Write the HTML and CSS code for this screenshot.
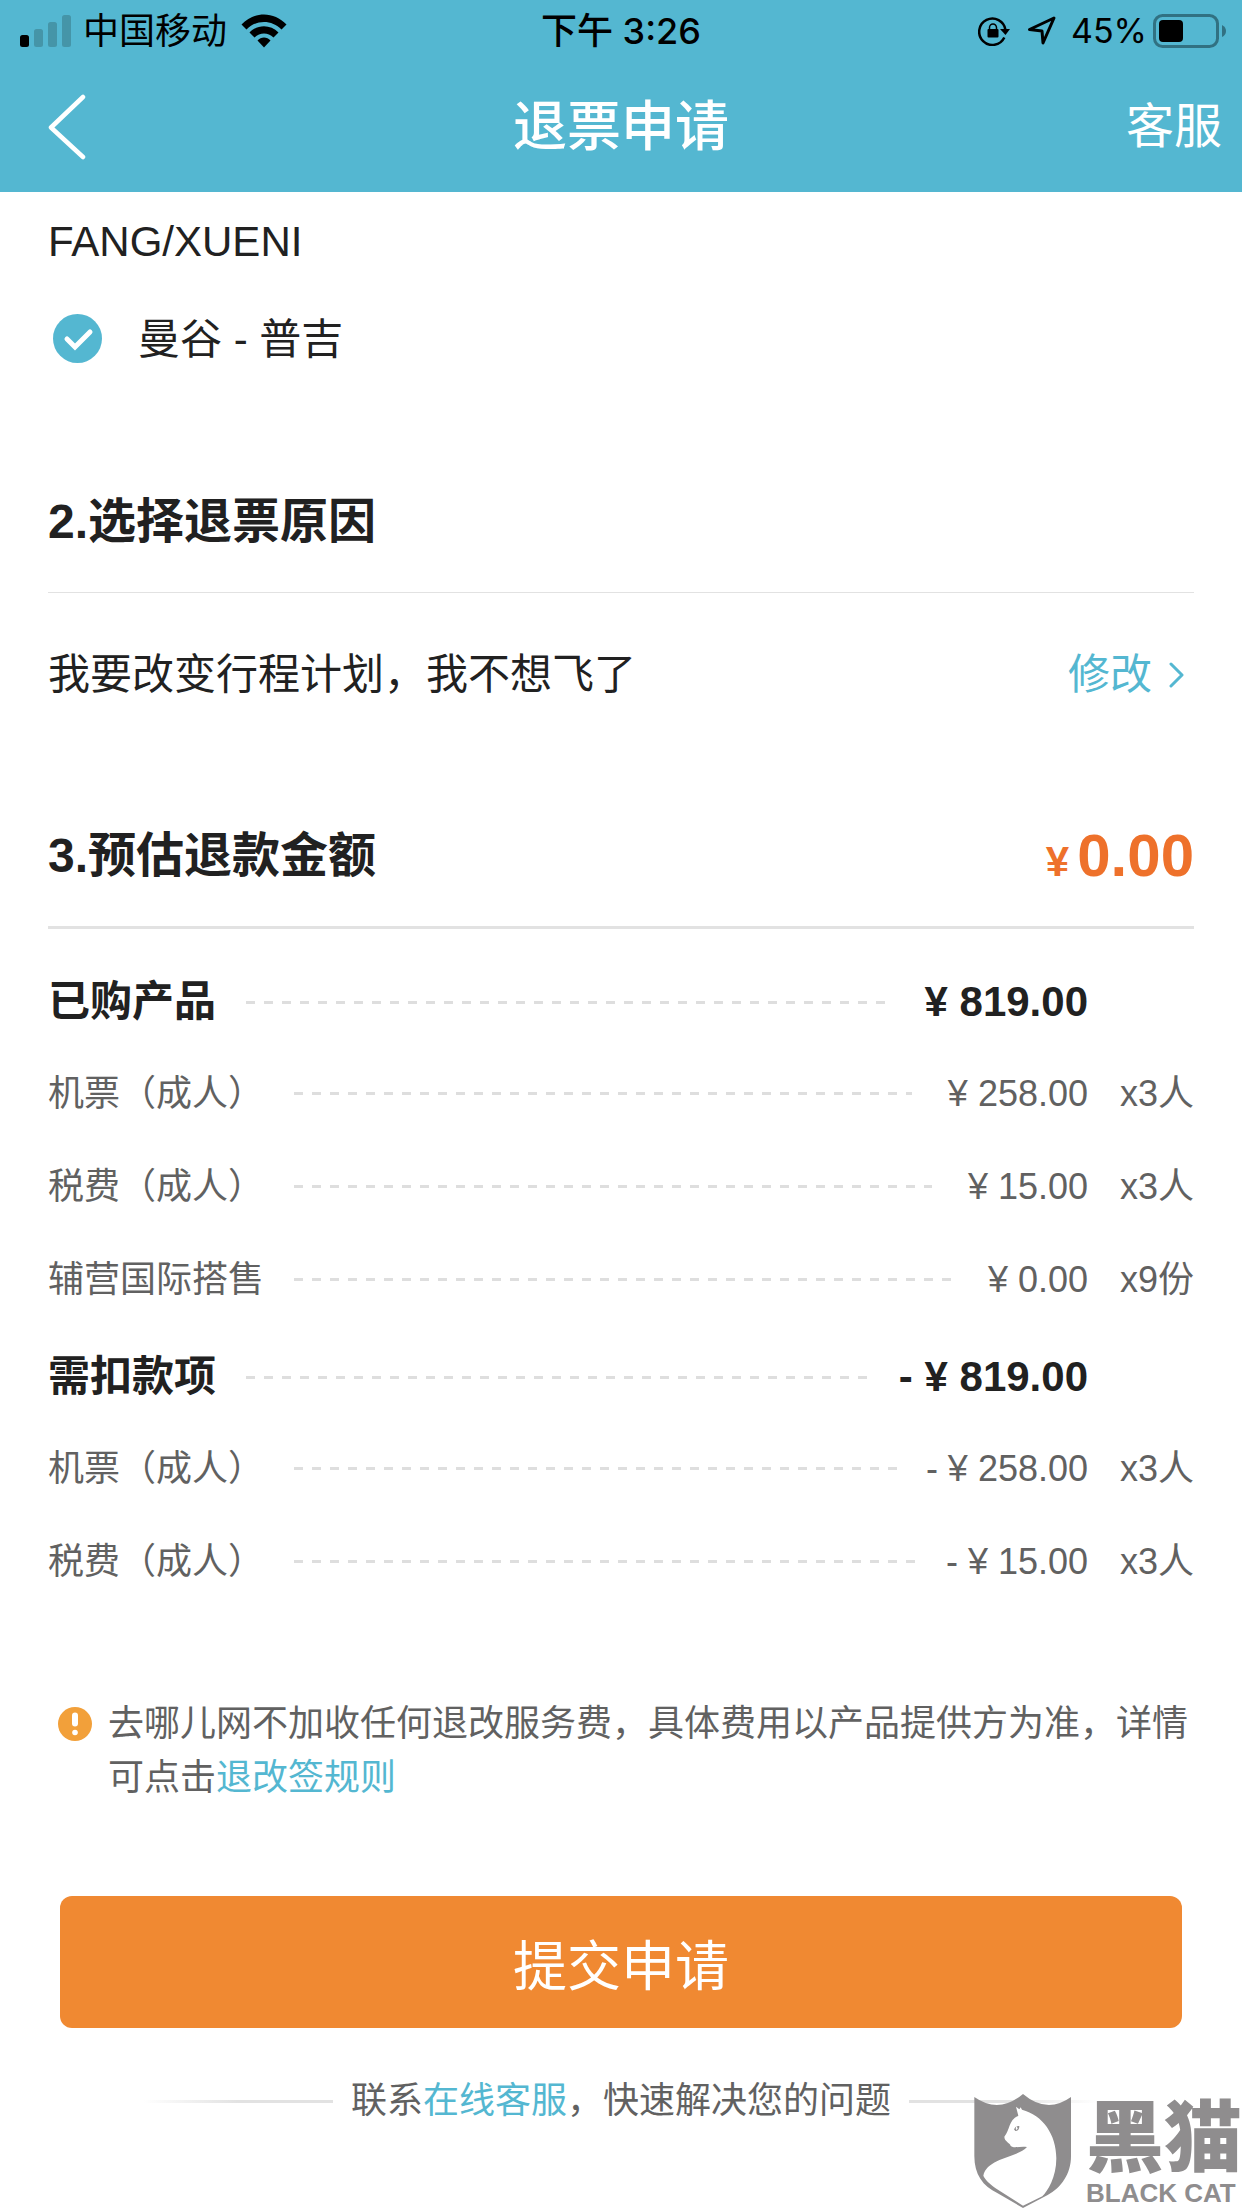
FILE: index.html
```html
<!DOCTYPE html>
<html lang="zh-CN">
<head>
<meta charset="utf-8">
<meta name="viewport" content="width=device-width, initial-scale=1">
<title>退票申请</title>
<link rel="stylesheet" href="styles.css">
</head>
<body>
<div class="page">
  <header class="topbar">
    <div class="status">
      <div class="status-side status-start">
        <svg class="signal" width="51" height="32" viewBox="0 0 51 32" aria-hidden="true">
          <rect x="0" y="20" width="9" height="12" rx="2.5"/>
          <g fill="#4595a8"><rect x="14" y="14" width="9" height="18" rx="2.5"/><rect x="28" y="7" width="9" height="25" rx="2.5"/><rect x="42" y="0" width="9" height="32" rx="2.5"/></g>
        </svg>
        <span class="carrier">中国移动</span>
        <svg class="wifi" width="46" height="34" viewBox="0 0 46 34" aria-hidden="true">
          <path d="M0.5 10.5C13-3 33-3 45.500 10.500L40.500 15.500C31 5.500 15 5.500 5.500 15.500Z"/>
          <path d="M8.500 18.500C16.500 10 29.500 10 37.500 18.500L32.500 23.500C27 18 19 18 13.500 23.500Z"/>
          <path d="M16.500 26.500C20 22.500 26 22.500 29.500 26.500L23 33.500Z"/>
        </svg>
      </div>
      <div class="clock">下午 3:26</div>
      <div class="status-side status-end">
        <svg class="lock" width="33" height="30" viewBox="0 0 33 30" aria-hidden="true">
          <path d="M26.300 21.500A13.200 13.200 0 1 1 27.500 14" fill="none" stroke="#000" stroke-width="2.500"/>
          <path d="M22 13H32L27.500 19Z"/>
          <rect x="9.500" y="13" width="11" height="8.500" rx="1"/>
          <path d="M11.500 14V11.500a3.500 3.500 0 0 1 7 0V14" fill="none" stroke="#000" stroke-width="1.500"/>
        </svg>
        <svg class="arrow" width="30" height="30" viewBox="0 0 30 30" aria-hidden="true">
          <path d="M27 2 2.500 13.500 15 15 16 27Z" fill="none" stroke="#000" stroke-width="3" stroke-linejoin="round"/>
        </svg>
        <span class="percent">45%</span>
        <svg class="battery" width="73" height="34" viewBox="0 0 73 34" aria-hidden="true">
          <rect x="1.500" y="1.500" width="63" height="31" rx="8" fill="none" stroke="#317182" stroke-width="3"/>
          <rect x="6" y="6" width="24" height="22" rx="4"/>
          <path d="M69 11Q73 13 73 17T69 23Z" fill="#317182"/>
        </svg>
      </div>
    </div>
    <nav class="nav">
      <button class="back" type="button" aria-label="返回">
        <svg width="38" height="66" viewBox="0 0 38 66" aria-hidden="true"><path d="M35 3 3 33.500 35 63" fill="none" stroke="#fff" stroke-width="4.500" stroke-linecap="round" stroke-linejoin="round"/></svg>
      </button>
      <h1 class="title">退票申请</h1>
      <a class="service" href="#service">客服</a>
    </nav>
  </header>

  <main class="content">
    <p class="passenger">FANG/XUENI</p>
    <label class="route"><input class="route-check" type="checkbox" checked><span class="route-name">曼谷 - 普吉</span></label>

    <section>
      <h2 class="section-head section-head-light">2.选择退票原因</h2>
      <div class="reason">
        <span>我要改变行程计划，我不想飞了</span>
        <a class="edit" href="#reason">修改
          <svg width="16" height="26" viewBox="0 0 16 26" aria-hidden="true"><path d="M3 2 14 13 3 24" fill="none" stroke="#54b7d1" stroke-width="3" stroke-linecap="round" stroke-linejoin="round"/></svg>
        </a>
      </div>
    </section>

    <section>
      <h2 class="section-head">3.预估退款金额<span class="refund"><span class="refund-sign">¥</span>0.00</span></h2>
      <ul class="costs">
        <li class="cost cost-total"><span class="cost-name">已购产品</span><span class="leader"></span><span class="amount">¥ 819.00</span><span class="qty"></span></li>
        <li class="cost"><span class="cost-name">机票（成人）</span><span class="leader"></span><span class="amount">¥ 258.00</span><span class="qty">x3人</span></li>
        <li class="cost"><span class="cost-name">税费（成人）</span><span class="leader"></span><span class="amount">¥ 15.00</span><span class="qty">x3人</span></li>
        <li class="cost"><span class="cost-name">辅营国际搭售</span><span class="leader"></span><span class="amount">¥ 0.00</span><span class="qty">x9份</span></li>
        <li class="cost cost-total"><span class="cost-name">需扣款项</span><span class="leader"></span><span class="amount amount-negative">- ¥ 819.00</span><span class="qty"></span></li>
        <li class="cost"><span class="cost-name">机票（成人）</span><span class="leader"></span><span class="amount amount-negative">- ¥ 258.00</span><span class="qty">x3人</span></li>
        <li class="cost"><span class="cost-name">税费（成人）</span><span class="leader"></span><span class="amount amount-negative">- ¥ 15.00</span><span class="qty">x3人</span></li>
      </ul>
    </section>

    <div class="notice">
      <svg class="notice-icon" width="34" height="34" viewBox="0 0 34 34" aria-hidden="true"><circle cx="17" cy="17" r="17" fill="#f2a03a"/><path d="M17 8.500V16.500" stroke="#fff" stroke-width="6" stroke-linecap="round"/><circle cx="17" cy="25.500" r="2.800" fill="#fff"/></svg>
      <p class="notice-text">去哪儿网不加收任何退改服务费，具体费用以产品提供方为准，详情可点击<a href="#rules">退改签规则</a></p>
    </div>

    <button class="submit" type="button">提交申请</button>
  </main>

  <footer class="contact">
    <span class="rule"></span>
    <span>联系<a href="#service">在线客服</a>，快速解决您的问题</span>
    <span class="rule rule-right"></span>
  </footer>

  <div class="brand">
    <svg width="98" height="114" viewBox="219 159 294 342" aria-hidden="true">
      <path d="M220 168Q294 220 366 159Q438 220 510 168V345C510 400 480 440 440 462L366 501 290 457C245 435 220 400 220 345Z" fill="#8f8d8e"/>
      <path d="M345 197 355 205 359 199 363 206C425 222 466 280 466 352C466 410 440 450 424 466L366 494 292 447C266 430 252 415 247 404C258 350 350 350 378 318C355 315 340 323 329 315C329 306 310 302 310 287C327 268 322 238 352 224Z" fill="#fff"/>
      <path d="M339 265Q343 254 355 255Q355 270 343 270Z" fill="#8f8d8e"/><path d="M346 256Q353 262 346 267Q343 262 346 256Z" fill="#fff"/>
    </svg>
    <div class="brand-text"><span class="brand-cn">黑猫</span><span class="brand-en">BLACK CAT</span></div>
  </div>
</div>
</body>
</html>
```
FILE: styles.css
```css
* {
  box-sizing: border-box;
}

body {
  margin: 0;
  background: #fff;
  color: #212121;
  font-family: "Liberation Sans", "Noto Sans CJK SC", sans-serif;
  font-size: 42px;
  line-height: 60px;
}

h1, h2, p, ul {
  margin: 0;
  padding: 0;
}

a {
  color: #54b7d1;
  text-decoration: none;
}

button {
  border: 0;
  font-family: inherit;
}

svg {
  display: block;
  flex: none;
}

.page {
  position: relative;
  min-height: 100vh;
}

/* Status bar and navigation */
.topbar {
  background: #54b7d1;
}

.status {
  display: grid;
  grid-template-columns: 1fr auto 1fr;
  align-items: center;
  height: 62px;
  padding: 0 16px;
  color: #000;
  font-family: Inter, "Noto Sans CJK SC", sans-serif;
  font-size: 36px;
}

.status-side {
  display: flex;
  align-items: center;
}

.status-start {
  padding-left: 4px;
}

.status-end {
  justify-content: flex-end;
}

.carrier {
  margin: 0 14px 0 12px;
}

.clock {
  font-weight: 500;
}

.arrow {
  margin: 0 14px 0 16px;
}

.percent {
  margin-right: 6px;
  font-size: 34px;
}

.nav {
  display: grid;
  grid-template-columns: 1fr auto 1fr;
  align-items: center;
  height: 130px;
  padding: 0 20px;
}

.back {
  justify-self: start;
  padding: 0 28px;
  background: none;
}

.title {
  color: #fff;
  font-size: 54px;
  font-weight: 500;
}

.service {
  justify-self: end;
  color: #fff;
  font-size: 48px;
}

/* Content */
.content {
  padding: 20px 48px 0;
}

.route {
  display: flex;
  align-items: center;
  gap: 36px;
  margin: 34px 0 116px;
  padding-left: 5px;
}

.route-name {
  padding-top: 4px;
}

.route-check {
  width: 49px;
  height: 49px;
  margin: 0;
  border-radius: 50%;
  appearance: none;
  background: #ddd;
}

.route-check:checked {
  background: #54b7d1 url("data:image/svg+xml,%3Csvg xmlns='http://www.w3.org/2000/svg' viewBox='0 0 49 49'%3E%3Cpath d='M14 25l8 8 15-15' fill='none' stroke='%23fff' stroke-width='5' stroke-linecap='round'/%3E%3C/svg%3E");
}

.section-head {
  display: flex;
  justify-content: space-between;
  padding-bottom: 34px;
  border-bottom: 3px solid #e2e2e2;
  font-size: 48px;
  font-weight: 700;
  line-height: 72px;
}

.section-head-light {
  border-bottom: 1px solid #e2e2e2;
}

.reason {
  display: flex;
  justify-content: space-between;
  margin: 52px 0 115px;
}

.edit {
  display: flex;
  align-items: center;
  gap: 16px;
  padding-right: 10px;
}

.refund {
  color: #ee712b;
  font-size: 60px;
}

.refund-sign {
  margin-right: 8px;
  font-size: 42px;
  line-height: 42px;
}

.costs {
  padding-top: 22px;
  list-style: none;
}

.cost {
  display: flex;
  align-items: center;
  height: 93px;
  color: #616161;
  font-size: 36px;
}

.cost-total {
  height: 96px;
  padding-top: 6px;
  color: #212121;
  font-size: 42px;
  font-weight: 700;
}

.cost-name {
  min-width: 216px;
}

.cost-total .cost-name {
  min-width: 0;
}

.leader {
  flex: 1;
  height: 3px;
  margin: 0 28px 0 30px;
  background: repeating-linear-gradient(90deg, #dedede 0 9px, transparent 9px 18px);
}

.amount {
  padding-left: 8px;
}

.amount-negative {
  padding-left: 0;
}

.qty {
  width: 106px;
  text-align: right;
}

.notice {
  display: flex;
  gap: 16px;
  margin-top: 89px;
  padding-left: 10px;
  color: #616161;
  font-size: 36px;
  line-height: 54px;
}

.notice-icon {
  margin-top: 10px;
}

.submit {
  display: block;
  width: calc(100% - 24px);
  height: 132px;
  margin: 91px 12px 0;
  border-radius: 12px;
  background: #f08932;
  color: #fff;
  font-size: 54px;
}

/* Contact line */
.contact {
  display: flex;
  align-items: center;
  justify-content: center;
  gap: 18px;
  margin-top: 46px;
  color: #616161;
  font-size: 36px;
  line-height: 54px;
}

.rule {
  width: 190px;
  height: 3px;
  background: linear-gradient(90deg, transparent, #e2e2e2 50%);
}

.rule-right {
  background: linear-gradient(270deg, transparent, #e2e2e2 50%);
}

.brand {
  position: absolute;
  right: 0;
  bottom: 0;
  display: flex;
  align-items: flex-end;
  gap: 14px;
  color: #8f8d8e;
  font-weight: 900;
}

.brand-text {
  display: flex;
  flex-direction: column;
}

.brand-cn {
  font-size: 78px;
  line-height: 78px;
}

.brand-en {
  font-size: 26px;
  line-height: 30px;
}
```
